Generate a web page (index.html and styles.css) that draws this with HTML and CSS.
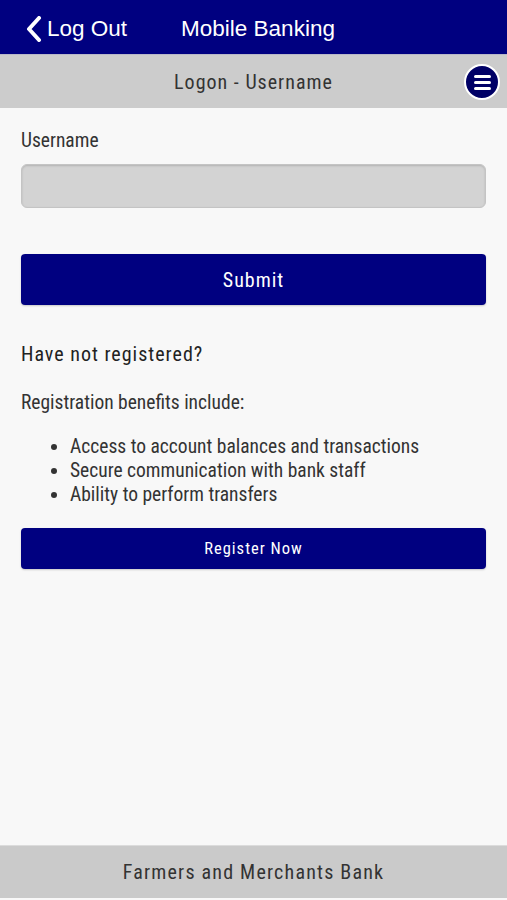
FILE: index.html
```html
<!DOCTYPE html>
<html lang="en">
<head>
  <meta charset="UTF-8">
  <meta name="viewport" content="width=device-width, initial-scale=1.0">
  <title>Mobile Banking</title>
  <link rel="stylesheet" href="styles.css">
</head>
<body>
  <!-- Top bar -->
  <div class="top-bar">
    <a class="back-link" href="#">
      <svg class="chevron" width="16" height="26" viewBox="0 0 16 26"><path d="M13 2 L3 13 L13 24" fill="none" stroke="#fff" stroke-width="4" stroke-linecap="round" stroke-linejoin="round"/></svg>
      <span>Log Out</span>
    </a>
    <span class="app-title">Mobile Banking</span>
  </div>

  <!-- Page title -->
  <div class="sub-bar">
    <span>Logon - Username</span>
    <button class="menu-btn" aria-label="Menu">
      <span></span><span></span><span></span>
    </button>
  </div>

  <div class="content">
    <label class="field-label" for="username">Username</label>
    <input type="text" id="username" class="field-input">

    <button class="btn btn-submit">Submit</button>

    <h2 class="reg-title">Have not registered?</h2>
    <p class="reg-text">Registration benefits include:</p>
    <ul class="reg-list">
      <li>Access to account balances and transactions</li>
      <li>Secure communication with bank staff</li>
      <li>Ability to perform transfers</li>
    </ul>

    <button class="btn btn-register">Register Now</button>
  </div>

  <div class="footer">Farmers and Merchants Bank</div>
</body>
</html>
```

FILE: styles.css
```css
html, body {
  height: 100%;
}
body {
  margin: 0;
  display: flex;
  flex-direction: column;
  background-color: #f8f8f8;
  font-family: "Roboto Condensed", Roboto, sans-serif;
  color: #333;
}
.top-bar {
  height: 55px;
  flex-shrink: 0;
  background-color: #000080;
  display: flex;
  align-items: center;
  padding: 3px 0 0 26px;
  box-sizing: border-box;
  border-bottom: 1px solid #b8b8c8;
  font-family: "Liberation Sans", Arial, sans-serif;
  color: #fff;
  font-size: 22.5px;
}
.back-link {
  display: flex;
  align-items: center;
  color: #fff;
  text-decoration: none;
}
.chevron {
  margin-right: 5px;
}
.app-title {
  margin-left: 54px;
}
.sub-bar {
  height: 53px;
  flex-shrink: 0;
  background-color: #cccccc;
  display: flex;
  align-items: center;
  justify-content: center;
  position: relative;
  font-size: 20px;
  letter-spacing: 1px;
  color: #333;
}
.menu-btn {
  position: absolute;
  right: 7px;
  top: 9px;
  width: 36px;
  height: 36px;
  border-radius: 50%;
  background-color: #000066;
  border: 2px solid #fff;
  display: flex;
  flex-direction: column;
  align-items: center;
  justify-content: center;
  gap: 3px;
  padding: 0;
}
.menu-btn span {
  width: 17px;
  height: 3px;
  border-radius: 2px;
  background-color: #fff;
}
.content {
  flex: 1;
  padding: 22px 21px 0 21px;
  display: flex;
  flex-direction: column;
}
.field-label {
  font-size: 19.5px;
  line-height: 22px;
  margin-bottom: 12px;
}
.field-input {
  height: 44px;
  box-sizing: border-box;
  background-color: #d3d3d3;
  border: 1px solid #c4c4c4;
  border-radius: 6px;
  box-shadow: inset 0 1px 2px rgba(0, 0, 0, 0.15);
  margin: 0 0 46px 0;
}
.btn {
  background-color: #000080;
  color: #fff;
  border: none;
  border-radius: 4px;
  font-family: inherit;
  letter-spacing: 1px;
  box-shadow: 0 1px 2px rgba(0, 0, 0, 0.2);
  cursor: pointer;
}
.btn-submit {
  height: 51px;
  font-size: 20px;
}
.reg-title {
  margin: 38px 0 0 0;
  font-size: 20px;
  font-weight: 400;
  letter-spacing: 1px;
  line-height: 22px;
  color: #222;
}
.reg-text {
  margin: 27px 0 0 0;
  font-size: 19.5px;
  line-height: 22px;
}
.reg-list {
  margin: 21px 0 0 0;
  padding-left: 49px;
  font-size: 19.5px;
  line-height: 24px;
}
.btn-register {
  margin-top: 21px;
  height: 41px;
  font-size: 16.5px;
}
.footer {
  height: 52px;
  flex-shrink: 0;
  margin-bottom: 2px;
  background-color: #cacaca;
  border-top: 1px solid #dcdcdc;
  display: flex;
  align-items: center;
  justify-content: center;
  font-size: 20px;
  letter-spacing: 1.2px;
  color: #333;
}
```
